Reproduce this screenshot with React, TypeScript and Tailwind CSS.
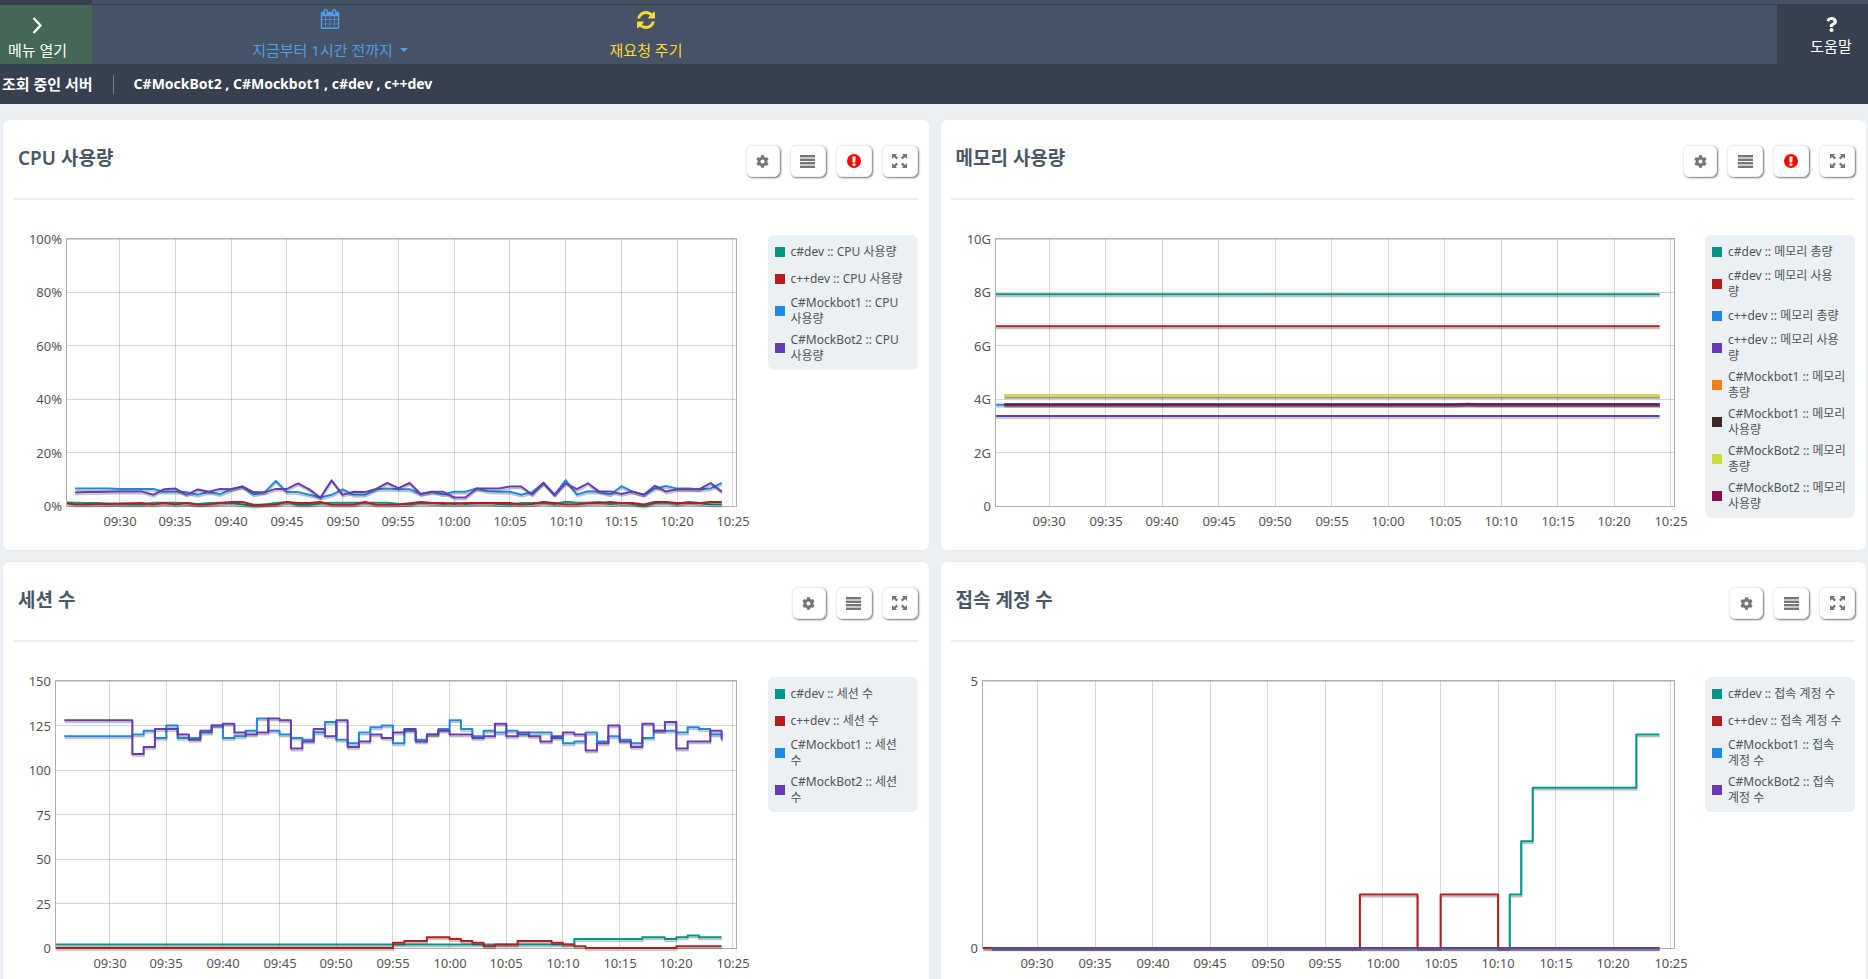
import { useLayoutEffect, useRef, useState } from "react";
import type { ReactNode } from "react";
import { FaCog, FaQuestion } from "react-icons/fa";

const TEAL = "#009688";
const RED = "#b71c1c";
const BLUE = "#1e88e5";
const PURPLE = "#673ab7";
const ORANGE = "#f57f17";
const BROWN = "#3e2723";
const LIME = "#cddc39";
const MAROON = "#880e4f";

// Times are minutes after 09:00.
const T_MIN = 25.27;
const T_SPAN = 60;

type Point = [number, number];
type Series = { label: string; color: string; points: Point[] };
type ChartSpec = {
  title: string;
  alert?: boolean;
  axisWidth: number;
  max: number;
  ticks: { value: number; label: string }[];
  steps?: boolean;
  series: Series[];
};

const everyMinute = (start: number, values: number[]): Point[] =>
  values.map((v, i) => [start + i, v] as Point);

const flat = (start: number, value: number): Point[] => [
  [start, value],
  [84, value],
];

const charts: ChartSpec[] = [
  {
    title: "CPU 사용량",
    alert: true,
    axisWidth: 54,
    max: 100,
    ticks: [0, 20, 40, 60, 80, 100].map((v) => ({ value: v, label: `${v}%` })),
    series: [
      {
        label: "c#dev :: CPU 사용량",
        color: TEAL,
        points: everyMinute(25, [
          1.3, 1.2, 1.1, 1.1, 0.9, 0.8, 0.6, 0.6, 1.2, 1.2, 1.2, 1.1, 0.7, 1.1, 1.2, 1.1, 0.6, 0.1, 0.6, 1.1,
          1.5, 0.5, 0.5, 1, 1.2, 1.2, 1.2, 1.2, 1.2, 1.2, 0.8, 0.6, 1.2, 1.1, 0.8, 1.2, 0.8, 1, 1.1, 0.7,
          0.6, 1.1, 1.1, 1.2, 0.8, 1.6, 1.2, 1.2, 1.5, 0.7, 1.1, 0.8, 0.1, 1.1, 1.3, 0.7, 1.5, 1.1, 0.6, 0.6,
        ]),
      },
      {
        label: "c++dev :: CPU 사용량",
        color: RED,
        points: everyMinute(25, [
          1, 0.6, 0.6, 0.7, 0.8, 0.9, 1, 1.1, 0.6, 1.1, 0.6, 1.1, 0.5, 0.6, 1.1, 1.5, 1.5, 0.5, 0.5, 0.5,
          1.5, 1.1, 1.1, 1.5, 0.5, 0.5, 0.5, 1.5, 0.5, 0.5, 0.6, 1, 1.5, 1.1, 1.1, 0.7, 1.1, 1.1, 1.1, 1.1,
          1.1, 0.6, 0.7, 1.5, 1.1, 0.6, 0.6, 1.1, 1.1, 1.5, 1.1, 1.1, 0.6, 1.5, 1.5, 1.1, 1.2, 1.1, 1.5, 1.5,
        ]),
      },
      {
        label: "C#Mockbot1 :: CPU\n사용량",
        color: BLUE,
        points: everyMinute(26, [
          6.5, 6.5, 6.5, 6.5, 6.4, 6.4, 6.4, 6.4, 5.3, 5.3, 5.2, 4.2, 5.3, 4.4, 6.3, 7.3, 4.3, 5.2, 9.4, 5.2,
          5.2, 4.2, 3.2, 4.2, 6.2, 4.2, 4.2, 6.3, 6.5, 6.3, 6.3, 4.5, 5.3, 4.3, 5.3, 5.3, 6.6, 5.5, 5.3, 5.3,
          4.2, 5.2, 8.6, 4.2, 9.7, 4.3, 5.5, 5.3, 4.3, 7.4, 5.4, 4.2, 6.6, 7.5, 6.5, 6.5, 6.3, 6.6, 8.7,
        ]),
      },
      {
        label: "C#MockBot2 :: CPU\n사용량",
        color: PURPLE,
        points: everyMinute(26, [
          5.1, 5.2, 5.2, 5.3, 5.4, 5.4, 5.4, 4.2, 6.3, 6.5, 4.2, 6.2, 5.3, 6.4, 6.3, 7.3, 5.2, 5.1, 6.4, 6.4,
          8.5, 6.2, 3.2, 9.6, 4.2, 5.3, 5.2, 6.4, 8.7, 6.7, 8.6, 4.5, 5.3, 5.3, 3.2, 3.2, 6.5, 6.5, 6.5, 7.3,
          7.3, 4.3, 8.7, 4.2, 8.5, 6.3, 8.5, 5.4, 5.4, 4.5, 5.4, 4.2, 7.6, 5.4, 6.3, 6.3, 6.3, 8.6, 5.4,
        ]),
      },
    ],
  },
  {
    title: "메모리 사용량",
    alert: true,
    axisWidth: 45,
    max: 10,
    ticks: [0, 2, 4, 6, 8, 10].map((v) => ({ value: v, label: v ? `${v}G` : "0" })),
    series: [
      { label: "c#dev :: 메모리 총량", color: TEAL, points: flat(25, 7.93) },
      { label: "c#dev :: 메모리 사용\n량", color: RED, points: flat(25, 6.73) },
      { label: "c++dev :: 메모리 총량", color: BLUE, points: flat(25, 3.79) },
      { label: "c++dev :: 메모리 사용\n량", color: PURPLE, points: flat(25, 3.37) },
      { label: "C#Mockbot1 :: 메모리\n총량", color: ORANGE, points: flat(26, 4.14) },
      { label: "C#Mockbot1 :: 메모리\n사용량", color: BROWN, points: flat(26, 3.81) },
      { label: "C#MockBot2 :: 메모리\n총량", color: LIME, points: flat(26, 4.12) },
      {
        label: "C#MockBot2 :: 메모리\n사용량",
        color: MAROON,
        points: [[26, 3.79], [66, 3.79], [67, 3.83], [68, 3.8], [84, 3.8]],
      },
    ],
  },
  {
    title: "세션 수",
    axisWidth: 43,
    max: 150,
    ticks: [0, 25, 50, 75, 100, 125, 150].map((v) => ({ value: v, label: `${v}` })),
    steps: true,
    series: [
      {
        label: "c#dev :: 세션 수",
        color: TEAL,
        points: [[25, 2], [71, 5], [77, 6], [79, 5], [80, 6], [81, 7], [82, 6], [84, 6]],
      },
      {
        label: "c++dev :: 세션 수",
        color: RED,
        points: [
          [25, 0], [55, 3], [56, 4], [58, 6], [60, 5], [61, 4], [62, 3], [63, 1], [64, 2], [66, 4], [69, 3],
          [70, 2], [71, 1], [72, 0], [80, 1], [84, 1],
        ],
      },
      {
        label: "C#Mockbot1 :: 세션\n수",
        color: BLUE,
        points: everyMinute(26, [
          119, 119, 119, 119, 119, 119, 120, 122, 118, 125, 118, 118, 121, 125, 118, 119, 122, 129, 122, 120,
          118, 117, 121, 127, 117, 115, 121, 124, 125, 115, 122, 117, 120, 123, 128, 123, 119, 122, 121, 122,
          120, 121, 121, 118, 115, 116, 121, 116, 119, 117, 115, 118, 122, 122, 121, 124, 123, 120, 119,
        ]),
      },
      {
        label: "C#MockBot2 :: 세션\n수",
        color: PURPLE,
        points: everyMinute(26, [
          128, 128, 128, 128, 128, 128, 109, 113, 123, 123, 120, 117, 122, 125, 126, 121, 120, 121, 129, 128,
          112, 116, 123, 119, 128, 113, 116, 120, 118, 121, 123, 116, 120, 122, 120, 120, 118, 119, 126, 119,
          121, 119, 116, 119, 121, 120, 111, 115, 125, 116, 113, 126, 122, 127, 112, 116, 116, 122, 117,
        ]),
      },
    ],
  },
  {
    title: "접속 계정 수",
    axisWidth: 32,
    max: 5,
    ticks: [
      { value: 0, label: "0" },
      { value: 5, label: "5" },
    ],
    steps: true,
    series: [
      {
        label: "c#dev :: 접속 계정 수",
        color: TEAL,
        points: [[25, 0], [71, 1], [72, 2], [73, 3], [82, 4], [84, 4]],
      },
      {
        label: "c++dev :: 접속 계정 수",
        color: RED,
        points: [[25, 0], [58, 1], [63, 0], [65, 1], [70, 0], [84, 0]],
      },
      { label: "C#Mockbot1 :: 접속\n계정 수", color: BLUE, points: flat(26, 0) },
      { label: "C#MockBot2 :: 접속\n계정 수", color: PURPLE, points: flat(26, 0) },
    ],
  },
];

const timeLabel = (t: number) =>
  `${String(9 + Math.floor(t / 60)).padStart(2, "0")}:${String(t % 60).padStart(2, "0")}`;

const TIME_TICKS = Array.from({ length: 12 }, (_, i) => 30 + i * 5);
const PLOT_TOP = 11;
const PLOT_HEIGHT = 267;
const RIGHT_MARGIN = 16;

function Plot({ spec }: { spec: ChartSpec }) {
  const box = useRef<HTMLDivElement>(null);
  const [width, setWidth] = useState(738);

  useLayoutEffect(() => {
    const node = box.current;
    if (!node) return;
    const measure = () => setWidth(Math.floor(node.clientWidth));
    measure();
    const observer = new ResizeObserver(measure);
    observer.observe(node);
    return () => observer.disconnect();
  }, []);

  const left = spec.axisWidth;
  const right = width - RIGHT_MARGIN;
  const bottom = PLOT_TOP + PLOT_HEIGHT;
  const x = (t: number) => left + ((t - T_MIN) / T_SPAN) * (right - left);
  const y = (v: number) => bottom - (v / spec.max) * PLOT_HEIGHT;
  const crisp = (n: number) => Math.floor(n) + 0.5;

  const path = (points: Point[]) =>
    points
      .map(([t, v], i) => {
        const px = Math.max(x(t), left).toFixed(1);
        const py = y(v).toFixed(1);
        if (i === 0) return `M${px} ${py}`;
        return spec.steps ? `H${px}V${py}` : `L${px} ${py}`;
      })
      .join("");

  return (
    <div ref={box} className="min-w-0 flex-1">
      <svg
        width={width}
        height={312}
        role="img"
        aria-label={spec.title}
        className="block overflow-visible fill-[#545454] text-[13px]"
      >
        <g fill="none" stroke="rgba(0,0,0,0.16)" shapeRendering="crispEdges">
          {TIME_TICKS.map((t) => (
            <path key={t} d={`M${crisp(x(t))} ${PLOT_TOP}V${bottom}`} />
          ))}
          {spec.ticks.map(({ value }) => (
            <path key={value} d={`M${left} ${crisp(y(value))}H${right}`} />
          ))}
        </g>
        <rect
          x={left - 0.5}
          y={PLOT_TOP - 0.5}
          width={right - left + 1}
          height={PLOT_HEIGHT + 1}
          fill="none"
          stroke="#adadad"
        />
        {spec.series.map((s) => {
          const d = path(s.points);
          return (
            <g key={s.label} fill="none" strokeLinejoin="round">
              <path d={d} transform="translate(0.4 2.5)" stroke="rgba(0,0,0,0.1)" strokeWidth="1.5" />
              <path d={d} transform="translate(0.3 1.8)" stroke="rgba(0,0,0,0.2)" strokeWidth="1.5" />
              <path d={d} stroke={s.color} strokeWidth="2" />
            </g>
          );
        })}
        {TIME_TICKS.map((t) => (
          <text key={t} x={Math.round(x(t))} y={298} textAnchor="middle">
            {timeLabel(t)}
          </text>
        ))}
        {spec.ticks.map(({ value, label }) => (
          <text key={value} x={left - 5} y={Math.round(y(value)) + 5} textAnchor="end">
            {label}
          </text>
        ))}
      </svg>
    </div>
  );
}

function Legend({ series }: { series: Series[] }) {
  return (
    <ul className="mt-[7px] w-[150px] shrink-0 self-start rounded-md bg-[#ebf0f5] pt-[3px] pb-1 pl-[7px] text-xs leading-4 text-[#545454]">
      {series.map((s) => (
        <li key={s.label} className="flex min-h-[27px] items-center gap-1.5 pt-[3px] pb-0.5">
          <span className="size-2.5 shrink-0" style={{ backgroundColor: s.color }} />
          <span className="whitespace-pre">{s.label}</span>
        </li>
      ))}
    </ul>
  );
}

function ListIcon() {
  return (
    <svg width="15" height="13" viewBox="0 0 15 13" fill="#757575" aria-hidden="true">
      <path d="M0 0h15v2H0zM0 4h15v2H0zM0 7h15v2H0zM0 11h15v2H0z" />
      <path d="M0 2h15v2H0zM0 9h15v2H0z" opacity="0.4" />
    </svg>
  );
}

function AlertIcon() {
  return (
    <svg width="14" height="14" viewBox="0 0 14 14" aria-hidden="true">
      <circle cx="7" cy="7" r="7" fill="#ff0000" />
      <path d="M5.3 2.6h3.4L8.3 8.5H5.7zM5.5 9.4h3v2.4h-3z" fill="#ffffff" />
    </svg>
  );
}

function ExpandIcon() {
  return (
    <svg width="15" height="14" viewBox="0 0 15 14" fill="#757575" aria-hidden="true">
      <path d="M0 0h5L3.6 1.4 6 3.8 4.4 5.4 2 3 0 5zM15 0h-5l1.4 1.4L9 3.8l1.6 1.6L13 3l2 2zM0 14h5l-1.4-1.4L6 10.2 4.4 8.6 2 11 0 9zM15 14h-5l1.4-1.4L9 10.2l1.6-1.6L13 11l2-2z" />
    </svg>
  );
}

function ToolButton({ label, narrow, children }: { label: string; narrow?: boolean; children: ReactNode }) {
  return (
    <button
      type="button"
      aria-label={label}
      className={`${narrow ? "w-[34px]" : "w-9"} flex h-8 items-center justify-center rounded-md border border-[#eeeeee] bg-white text-[#757575] shadow-[1px_1px_2px_#777777]`}
    >
      {children}
    </button>
  );
}

function Panel({ spec }: { spec: ChartSpec }) {
  return (
    <section className="rounded-md bg-white pr-[11px] pb-[10px] pl-[10px] shadow-[0_0_1px_#dddddd]">
      <header className="flex h-20 items-start justify-between border-b-2 border-[#eeeeee] pl-[5px]">
        <h2 className="mt-[26px] text-[19px] leading-6 font-semibold text-[#4a5866]">{spec.title}</h2>
        <div className="mt-[25px] flex gap-[10px]">
          <ToolButton label="설정" narrow>
            <FaCog size={13} />
          </ToolButton>
          <ToolButton label="목록">
            <ListIcon />
          </ToolButton>
          {spec.alert && (
            <ToolButton label="경고">
              <AlertIcon />
            </ToolButton>
          )}
          <ToolButton label="확대">
            <ExpandIcon />
          </ToolButton>
        </div>
      </header>
      <div className="flex gap-4 pt-7">
        <Plot spec={spec} />
        <Legend series={spec.series} />
      </div>
    </section>
  );
}

function CalendarIcon() {
  return (
    <svg width="20" height="20" viewBox="0 0 1792 1792" fill="currentColor" aria-hidden="true">
      <path d="M192 1664h288v-288h-288v288zm352 0h320v-288h-320v288zm-352-352h288v-320h-288v320zm352 0h320v-320h-320v320zm-352-384h288v-288h-288v288zm736 736h320v-288h-320v288zm-384-736h320v-288h-320v288zm768 736h288v-288h-288v288zm-384-352h320v-320h-320v320zm-352-864v-288q0-13-9.5-22.5t-22.5-9.5h-64q-13 0-22.5 9.5t-9.5 22.5v288q0 13 9.5 22.5t22.5 9.5h64q13 0 22.5-9.5t9.5-22.5zm736 864h288v-320h-288v320zm-384-384h320v-288h-320v288zm384 0h288v-288h-288v288zm32-480v-288q0-13-9.5-22.5t-22.5-9.5h-64q-13 0-22.5 9.5t-9.5 22.5v288q0 13 9.5 22.5t22.5 9.5h64q13 0 22.5-9.5t9.5-22.5zm384-64v1280q0 52-38 90t-90 38h-1408q-52 0-90-38t-38-90v-1280q0-52 38-90t90-38h128v-96q0-66 47-113t113-47h64q66 0 113 47t47 113v96h384v-96q0-66 47-113t113-47h64q66 0 113 47t47 113v96h128q52 0 90 38t38 90z" />
    </svg>
  );
}

function RefreshIcon() {
  return (
    <svg width="18" height="18" viewBox="0 0 1536 1536" fill="currentColor" aria-hidden="true">
      <path d="M1511 928q0 5-1 7-64 268-268 434.5t-478 166.5q-146 0-282.5-55t-243.5-157l-129 129q-19 19-45 19t-45-19-19-45v-448q0-26 19-45t45-19h448q26 0 45 19t19 45-19 45l-137 137q71 66 161 102t187 36q134 0 250-65t186-179q11-17 53-117 8-23 30-23h192q13 0 22.5 9.5t9.5 22.5zm25-800v448q0 26-19 45t-45 19h-448q-26 0-45-19t-19-45 19-45l138-138q-148-137-349-137-134 0-250 65t-186 179q-11 17-53 117-8 23-30 23h-199q-13 0-22.5-9.5t-9.5-22.5v-7q65-268 270-434.5t480-166.5q146 0 284 55.5t245 156.5l130-129q19-19 45-19t45 19 19 45z" />
    </svg>
  );
}

export default function App() {
  return (
    <div className="flex h-screen flex-col bg-[#ebf0f5] font-['Noto_Sans','Noto_Sans_CJK_KR',sans-serif] text-[15px]">
      <div className="shrink-0 bg-[#36404e]">
        <div className="ml-[92px] h-1 bg-[#465265]" />
        <nav className="mt-px flex h-[59px] bg-[#465265]">
          <button
            type="button"
            className="flex w-[92px] flex-col items-start bg-[#466656] pt-3 pl-2 leading-5 text-white"
          >
            <svg
              width="11"
              height="17"
              viewBox="0 0 11 17"
              fill="none"
              stroke="currentColor"
              strokeWidth="2.4"
              className="ml-6"
              aria-hidden="true"
            >
              <path d="M1.5 1 8.5 8.5 1.5 16" />
            </svg>
            <span className="mt-[6px]">메뉴 열기</span>
          </button>
          <div className="flex flex-1 pl-20">
            <button type="button" className="flex w-[316px] flex-col items-center pt-1 leading-5 text-[#519ceb]">
              <CalendarIcon />
              <span className="mt-[11px] flex items-center gap-[7px]">
                지금부터 1시간 전까지
                <svg width="8" height="4" viewBox="0 0 8 4" fill="currentColor" aria-hidden="true">
                  <path d="M0 0h8L4 4z" />
                </svg>
              </span>
            </button>
            <button type="button" className="flex w-[316px] flex-col items-center pt-[6px] leading-5 text-[#fdd835]">
              <RefreshIcon />
              <span className="mt-[11px]">재요청 주기</span>
            </button>
          </div>
          <a href="#help" className="flex w-[91px] flex-col items-center bg-[#36404e] pt-3 pl-[17px] leading-5 text-white">
            <FaQuestion size={15} />
            <span className="mt-1">도움말</span>
          </a>
        </nav>
        <div className="flex h-10 items-center pl-0.5 text-sm leading-5 font-bold text-white">
          <span className="text-[15px]">조회 중인 서버</span>
          <span className="mx-5 h-[19px] w-px bg-[#76808c]" />
          <span>C#MockBot2 , C#Mockbot1 , c#dev , c++dev</span>
        </div>
      </div>
      <main className="grid min-h-0 flex-1 auto-rows-max grid-cols-2 gap-3 overflow-y-auto pt-4 pr-0.5 pl-[3px] [scrollbar-width:none]">
        {charts.map((spec) => (
          <Panel key={spec.title} spec={spec} />
        ))}
      </main>
    </div>
  );
}
